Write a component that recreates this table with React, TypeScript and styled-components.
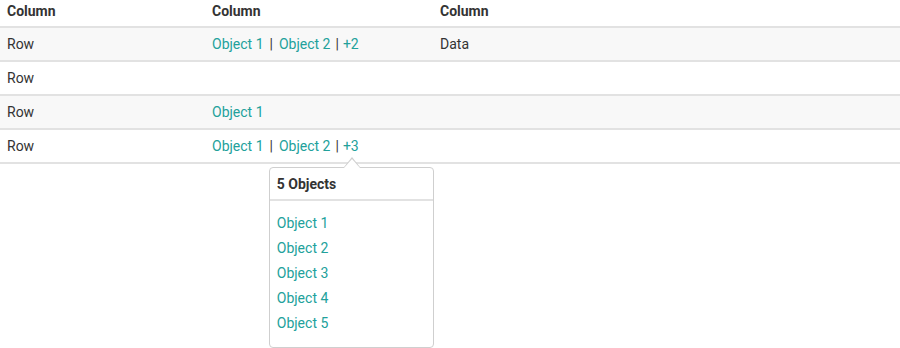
import React from 'react';
import styled, { createGlobalStyle } from 'styled-components';

const GlobalStyle = createGlobalStyle`
  html, body {
    margin: 0;
    padding: 0;
    background: #ffffff;
    font-family: Roboto, 'Liberation Sans', sans-serif;
    font-size: 14px;
    color: #333333;
  }
`;

const TEAL = '#22a19b';

const Page = styled.div`
  min-height: 348px;
  position: relative;
`;

const Table = styled.table`
  width: 100%;
  border-collapse: collapse;
  table-layout: fixed;
`;

const HeadCell = styled.th<{ width?: string }>`
  width: ${(props) => props.width || 'auto'};
  height: 22px;
  padding: 0 7px 4px;
  text-align: left;
  vertical-align: middle;
  font-weight: 700;
  line-height: 16px;
  color: #333333;
  border-bottom: 2px solid #e2e2e2;
`;

const Row = styled.tr<{ striped?: boolean }>`
  background: ${(props) => (props.striped ? '#f8f8f8' : '#ffffff')};
`;

const Cell = styled.td`
  height: 32px;
  padding: 0 7px;
  vertical-align: middle;
  border-bottom: 2px solid #e2e2e2;
  line-height: 16px;
`;

const LinkList = styled.div`
  display: flex;
  align-items: center;
`;

const ObjectLink = styled.a`
  color: ${TEAL};
  text-decoration: none;
  cursor: pointer;
  line-height: 16px;
`;

const Separator = styled.span<{ tight?: boolean }>`
  color: #333333;
  margin: ${(props) => (props.tight ? '0 4px 0 5px' : '0 6px 0 6px')};
`;

const MoreAnchor = styled.span`
  position: relative;
  display: inline-block;
`;

const Popover = styled.div`
  position: absolute;
  top: calc(100% + 13px);
  left: 50%;
  transform: translateX(-82px);
  width: 163px;
  background: #ffffff;
  border: 1px solid #cfcfcf;
  border-radius: 4px;
  z-index: 10;

  &::before,
  &::after {
    content: '';
    position: absolute;
    left: 74px;
    width: 0;
    height: 0;
    border-left: 8px solid transparent;
    border-right: 8px solid transparent;
  }

  &::before {
    top: -11px;
    border-bottom: 10px solid #cfcfcf;
  }

  &::after {
    top: -9px;
    border-bottom: 9px solid #ffffff;
  }
`;

const PopoverTitle = styled.div`
  height: 31px;
  line-height: 32px;
  padding: 0 7px;
  font-weight: 700;
  color: #333333;
  border-bottom: 2px solid #e2e2e2;
`;

const PopoverList = styled.ul`
  list-style: none;
  margin: 0;
  padding: 10px 7px 11px;
`;

const PopoverItem = styled.li`
  line-height: 25px;
  color: ${TEAL};
`;

type RowData = {
  label: string;
  objects: string[];
  data?: string;
  open?: boolean;
};

const rows: RowData[] = [
  { label: 'Row', objects: ['Object 1', 'Object 2', 'Object 3', 'Object 4'], data: 'Data' },
  { label: 'Row', objects: [] },
  { label: 'Row', objects: ['Object 1'] },
  { label: 'Row', objects: ['Object 1', 'Object 2', 'Object 3', 'Object 4', 'Object 5'], open: true },
];

const Objects: React.FC<{ items: string[]; open?: boolean }> = ({ items, open }) => {
  if (items.length === 0) return null;
  const shown = items.slice(0, 2);
  const rest = items.length - shown.length;
  return (
    <LinkList>
      {shown.map((item, i) => (
        <React.Fragment key={item}>
          {i > 0 && <Separator>|</Separator>}
          <ObjectLink>{item}</ObjectLink>
        </React.Fragment>
      ))}
      {rest > 0 && (
        <>
          <Separator tight>|</Separator>
          <MoreAnchor>
            <ObjectLink>+{rest}</ObjectLink>
            {open && (
              <Popover>
                <PopoverTitle>{items.length} Objects</PopoverTitle>
                <PopoverList>
                  {items.map((item) => (
                    <PopoverItem key={item}>{item}</PopoverItem>
                  ))}
                </PopoverList>
              </Popover>
            )}
          </MoreAnchor>
        </>
      )}
    </LinkList>
  );
};

export default function App() {
  return (
    <Page>
      <GlobalStyle />
      <Table>
        <thead>
          <tr>
            <HeadCell width="191px">Column</HeadCell>
            <HeadCell width="214px">Column</HeadCell>
            <HeadCell>Column</HeadCell>
          </tr>
        </thead>
        <tbody>
          {rows.map((row, i) => (
            <Row key={i} striped={i % 2 === 0}>
              <Cell>{row.label}</Cell>
              <Cell>
                <Objects items={row.objects} open={row.open} />
              </Cell>
              <Cell>{row.data}</Cell>
            </Row>
          ))}
        </tbody>
      </Table>
    </Page>
  );
}
